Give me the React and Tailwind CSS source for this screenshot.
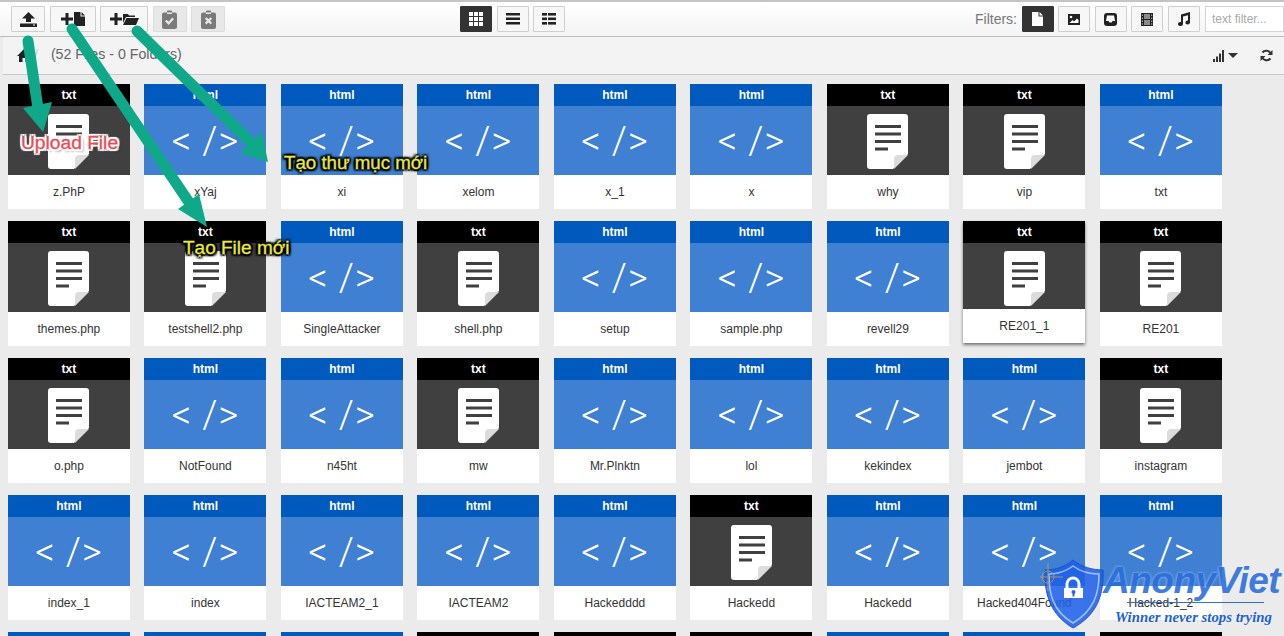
import React from "react";

const rows = [
  [["t","z.PhP"],["h","xYaj"],["h","xi"],["h","xelom"],["h","x_1"],["h","x"],["t","why"],["t","vip"],["h","txt"]],
  [["t","themes.php"],["t","testshell2.php"],["h","SingleAttacker"],["t","shell.php"],["h","setup"],["h","sample.php"],["h","revell29"],["t","RE201_1",true],["t","RE201"]],
  [["t","o.php"],["h","NotFound"],["h","n45ht"],["t","mw"],["h","Mr.Plnktn"],["h","lol"],["h","kekindex"],["h","jembot"],["t","instagram"]],
  [["h","index_1"],["h","index"],["h","IACTEAM2_1"],["h","IACTEAM2"],["h","Hackedddd"],["t","Hackedd"],["h","Hackedd"],["h","Hacked404Found"],["h","Hacked-1_2"]],
  [["h",""],["h",""],["h",""],["t",""],["t",""],["t",""],["h",""],["h",""],["t",""]],
];

function DocIcon() {
  return (
    <svg width="41" height="55" viewBox="0 0 41 55" className="block">
      <path d="M3 0h35a3 3 0 0 1 3 3v37L26 55H3a3 3 0 0 1-3-3V3a3 3 0 0 1 3-3z" fill="#fff" />
      <path d="M41 41 L27 55 L27 45 Q27 41 31 41 Z" fill="#dcdcdc" />
      <rect x="8" y="11" width="26" height="3" fill="#404040" />
      <rect x="8" y="18.5" width="26" height="3" fill="#404040" />
      <rect x="8" y="26" width="26" height="3" fill="#404040" />
      <rect x="8" y="33.5" width="13" height="3" fill="#404040" />
    </svg>
  );
}

function Card({ type, name, hover }) {
  const isTxt = type === "t";
  return (
    <div className={`w-[122px] flex flex-col ${hover ? "h-[122px] shadow-[0_2px_3px_rgba(0,0,0,0.5)]" : "h-[125px]"}`}>
      <div className={`h-[22px] flex items-center justify-center text-white text-[12px] font-bold ${isTxt ? "bg-black" : "bg-[#0059bd]"}`}>
        {isTxt ? "txt" : "html"}
      </div>
      <div className={`${hover ? "h-[66px]" : "h-[69px]"} overflow-hidden flex justify-center ${isTxt ? "bg-[#404040] pt-2" : "bg-[#4080d2] items-center"}`}>
        {isTxt ? <DocIcon /> : (
          <span className="text-white text-[38px] leading-none font-light whitespace-pre tracking-[1px] [font-family:Roboto,sans-serif]">{"< />"}</span>
        )}
      </div>
      <div className="flex-1 bg-white flex items-center justify-center text-[12px] text-[#333]">{name}</div>
    </div>
  );
}

const Btn = ({ w, active, disabled, children }) => (
  <div
    className={`h-[26px] ${w} flex items-center justify-center border rounded-[1px] ${
      active ? "bg-[#333] border-[#333]" : disabled ? "bg-[#e8e8e8] border-[#dcdcdc]" : "bg-[#f7f7f7] border-[#cfcfcf]"
    }`}
  >
    {children}
  </div>
);

const Upload = () => (
  <svg width="17" height="15" viewBox="0 0 17 15"><path d="M8.5 0 L15 6.5 H11 V10 H6 V6.5 H2 Z M0 11.5 H17 V15 H0 Z" fill="#222" /><rect x="13" y="12.5" width="2" height="1" fill="#fff"/></svg>
);
const Plus = () => (
  <svg width="12" height="12" viewBox="0 0 12 12"><path d="M4.5 0h3v4.5H12v3H7.5V12h-3V7.5H0v-3h4.5z" fill="#222" /></svg>
);
const FileI = ({ c = "#222" }) => (
  <svg width="11" height="14" viewBox="0 0 11 14"><path d="M0 0h6.5v4.5H11V14H0z M7.5 0 L11 3.5 H7.5z" fill={c} /></svg>
);
const Folder = () => (
  <svg width="16" height="12" viewBox="0 0 16 12"><path d="M0 1h5l1 1.5h6V4H3L0 10z M3.5 5H16l-3 7H0z" fill="#222" /></svg>
);
const Clip = ({ x }) => (
  <svg width="15" height="19" viewBox="0 0 15 19">
    <path d="M2 2.5h3V1.5a1 1 0 0 1 1-1h3a1 1 0 0 1 1 1v1h3a2 2 0 0 1 2 2V17a2 2 0 0 1-2 2H2a2 2 0 0 1-2-2V4.5a2 2 0 0 1 2-2z" fill="#7a7a7a" />
    <rect x="5" y="2.5" width="5" height="1.5" fill="#e8e8e8" />
    {x ? <path d="M4.7 8l5.6 5.6M10.3 8l-5.6 5.6" stroke="#e8e8e8" strokeWidth="2.2" /> : <path d="M3.8 10.5l2.8 2.8 4.6-5" stroke="#e8e8e8" strokeWidth="2.2" fill="none" />}
  </svg>
);
const Grid3 = ({ c }) => (
  <svg width="14" height="14" viewBox="0 0 14 14" fill={c}>
    {[0, 5, 10].flatMap((y) => [0, 5, 10].map((x) => <rect key={x + "-" + y} x={x} y={y} width="4" height="4" />))}
  </svg>
);
const ListI = () => (
  <svg width="14" height="12" viewBox="0 0 14 12" fill="#222"><rect width="14" height="2.5" /><rect y="4.5" width="14" height="2.5" /><rect y="9" width="14" height="2.5" /></svg>
);
const Table = () => (
  <svg width="14" height="12" viewBox="0 0 14 12" fill="#222">
    {[0, 4.5, 9].map((y) => <g key={y}><rect y={y} width="5" height="2.6" /><rect x="6" y={y} width="8" height="2.6" /></g>)}
  </svg>
);
const ImageI = () => (
  <svg width="12" height="11" viewBox="0 0 12 11"><path d="M0 0h12v11H0z" fill="#222" /><circle cx="3" cy="3" r="1.3" fill="#fff" /><path d="M1.5 9l3-3 1.5 1.5L9 4.5 10.5 6v3z" fill="#fff" /></svg>
);
const Inbox = () => (
  <svg width="13" height="13" viewBox="0 0 13 13"><path d="M3 0h7a3 3 0 0 1 3 3v7a3 3 0 0 1-3 3H3a3 3 0 0 1-3-3V3a3 3 0 0 1 3-3z" fill="#222" /><path d="M3 2.5h7L11 8H8.5L7.5 9.5h-2L4.5 8H2z" fill="#fff" /></svg>
);
const Film = () => (
  <svg width="12" height="13" viewBox="0 0 12 13">
    <path d="M0 0h12v13H0z" fill="#222" />
    <path d="M3 1h6v5H3zM3 7h6v5H3z" fill="#8a8a8a" />
    <path d="M.8 1.5h1.2v1.5H.8zM.8 4.5h1.2v1.5H.8zM.8 7.5h1.2v1.5H.8zM.8 10.2h1.2v1.5H.8zM10 1.5h1.2v1.5H10zM10 4.5h1.2v1.5H10zM10 7.5h1.2v1.5H10zM10 10.2h1.2v1.5H10z" fill="#999" />
  </svg>
);
const Music = () => (
  <svg width="13" height="14" viewBox="0 0 13 14"><path d="M4 2.5 L13 0 V10.5a2.3 2 0 1 1-2-2V3.2L6 4.6V12a2.5 2 0 1 1-2-2z" fill="#222" /></svg>
);

function Arrow({ tail, tip, a, b, w = 11 }) {
  const mx = (a[0] + b[0]) / 2, my = (a[1] + b[1]) / 2;
  return (
    <g>
      <line x1={tail[0]} y1={tail[1]} x2={mx} y2={my} stroke="#0fa98a" strokeWidth={w} strokeLinecap="round" />
      <polygon points={`${a} ${b} ${tip}`} fill="#0fa98a" />
    </g>
  );
}

export default function App() {
  return (
    <div className="relative w-[1284px] h-[636px] overflow-hidden bg-[#ebebeb] text-[#333] [font-family:'Liberation_Sans',Arial,sans-serif]">
      {/* toolbar */}
      <div className="h-[37px] flex items-center justify-between pl-[11px] pr-0 border-t-2 border-b border-t-[#c4c4c4] border-b-[#bdbdbd] bg-gradient-to-b from-white to-[#f4f4f4]">
        <div className="flex gap-[4.5px]">
          <Btn w="w-[34px]"><Upload /></Btn>
          <Btn w="w-[46px]"><div className="flex gap-[1px] items-center"><Plus /><FileI /></div></Btn>
          <Btn w="w-[48px]"><div className="flex gap-[1px] items-center"><Plus /><Folder /></div></Btn>
          <Btn w="w-[34px]" disabled><Clip /></Btn>
          <Btn w="w-[34px]" disabled><Clip x /></Btn>
        </div>
        <div className="flex gap-[4.5px] ml-[235px]">
          <Btn w="w-8" active><Grid3 c="#fff" /></Btn>
          <Btn w="w-8"><ListI /></Btn>
          <Btn w="w-8"><Table /></Btn>
        </div>
        <div className="flex items-center gap-[4.5px] ml-auto">
          <span className="text-[14px] text-[#777]">Filters:</span>
          <Btn w="w-8" active><FileI c="#fff" /></Btn>
          <Btn w="w-8"><ImageI /></Btn>
          <Btn w="w-8"><Inbox /></Btn>
          <Btn w="w-8"><Film /></Btn>
          <Btn w="w-8"><Music /></Btn>
          <div className="ml-[1px] w-[79px] h-[26px] border border-[#d4d4d4] bg-white flex items-center pl-[6px] text-[12px] text-[#aaa]">text filter...</div>
        </div>
      </div>
      {/* breadcrumb */}
      <div className="h-[38px] ml-[3px] flex items-center justify-between bg-[#f3f3f3] border-b border-[#c8c8c8] rounded-tl-[3px] pl-[14px] pr-[11px]">
        <div className="flex items-center">
          <svg width="14" height="13" viewBox="0 0 14 13"><path d="M7 0 L14 7 H12 V13 H8.5 V9 H5.5 V13 H2 V7 H0 Z" fill="#222" /></svg>
          <span className="text-[#ccc] text-[14px] ml-[3px]">/</span>
          <span className="text-[14.2px] text-[#666] ml-[13px] mt-[-1px]">(52 Files - 0 Folders)</span>
        </div>
        <div className="flex items-center">
          <svg width="12" height="12" viewBox="0 0 12 12" fill="#333"><rect y="9" width="2" height="3" /><rect x="3" y="6.5" width="2" height="5.5" /><rect x="6" y="3.5" width="2" height="8.5" /><rect x="9" y="0" width="2" height="12" /></svg>
          <span className="ml-[3px] w-0 h-0 border-x-[5px] border-x-transparent border-t-[5px] border-t-[#333]"></span>
          <svg width="13" height="13" viewBox="0 0 13 13" className="ml-[22px]" fill="none" stroke="#333" strokeWidth="2"><path d="M11 5A5 5 0 0 0 2.5 3.5M2 8a5 5 0 0 0 8.5 1.5" /><path d="M12.5 1v5h-5z M.5 12V7h5z" fill="#333" stroke="none" /></svg>
        </div>
      </div>
      {/* grid */}
      <div className="pt-[9px] pl-[7.9px] flex flex-col gap-3">
        {rows.map((row, i) => (
          <div key={i} className="grid grid-cols-[repeat(9,122px)] gap-x-[14.5px] h-[125px]">
            {row.map(([t, n, h], j) => <Card key={j} type={t} name={n} hover={h} />)}
          </div>
        ))}
      </div>

      {/* annotations */}
      <svg className="absolute left-0 top-0 pointer-events-none" width="1284" height="636">
        <Arrow tail={[28, 41]} tip={[43, 132]} a={[23, 108]} b={[52, 102]} />
        <Arrow tail={[72, 29]} tip={[207, 227]} a={[178, 209]} b={[199, 194]} />
        <Arrow tail={[137, 31]} tip={[268, 162]} a={[240, 153]} b={[262, 132]} />
      </svg>
      <div className="absolute left-[21px] top-[131px] text-[19.2px] leading-6 text-[#ef4a57] whitespace-nowrap [-webkit-text-stroke:0.3px_#ef4a57] [text-shadow:2px_0_0_#fff,-2px_0_0_#fff,0_2px_0_#fff,0_-2px_0_#fff,2px_2px_1px_#fff,-2px_-2px_1px_#fff,2px_-2px_1px_#fff,-2px_2px_1px_#fff,3px_3px_2px_rgba(0,0,0,0.3)]">Upload File</div>
      <div className="absolute left-[284px] top-[151px] text-[18.7px] leading-6 text-[#eaea3c] whitespace-nowrap [-webkit-text-stroke:0.3px_#eaea3c] [text-shadow:2px_0_1px_#000,-2px_0_1px_#000,0_2px_1px_#000,0_-2px_1px_#000,2px_2px_2px_#000,-2px_-2px_2px_#000,2px_-2px_2px_#000,-2px_2px_2px_#000]">Tạo thư mục mới</div>
      <div className="absolute left-[183px] top-[236px] text-[19px] leading-6 text-[#eaea3c] whitespace-nowrap [-webkit-text-stroke:0.3px_#eaea3c] [text-shadow:2px_0_1px_#000,-2px_0_1px_#000,0_2px_1px_#000,0_-2px_1px_#000,2px_2px_2px_#000,-2px_-2px_2px_#000,2px_-2px_2px_#000,-2px_2px_2px_#000]">Tạo File mới</div>

      {/* watermark */}
      <svg className="absolute left-[1040px] top-[555px] opacity-95" width="70" height="75" viewBox="0 0 70 75">
        <path d="M33 5 C41 12 53 15 63 15 C64 40 57 60 33 73 C11 60 4 40 5 15 C15 15 25 12 33 5z" fill="#1f5fe8" fillOpacity="0.92" stroke="#1a50c8" strokeWidth="1" />
        <path d="M33 11 C41 17 51 19 59 19 C59 40 53 56 33 68 C13 56 9 40 9 19 C17 19 25 17 33 11z" fill="none" stroke="#9cc0f8" strokeWidth="1.5" />
        <path d="M27 33 V29 a6 6 0 0 1 12 0 V33" fill="none" stroke="#fff" strokeWidth="3" />
        <rect x="24" y="33" width="19" height="10" fill="#fff" />
        <circle cx="33.5" cy="37" r="2" fill="#1f5fe8" />
        <rect x="32.5" y="38" width="2" height="3.5" fill="#1f5fe8" />
        <g stroke="#c9a25a" strokeWidth="1" fill="none" opacity="0.8">
          <circle cx="8" cy="22" r="6" />
          <path d="M-3 22H23M8 8V36" />
        </g>
      </svg>
      <div className="absolute left-[1103px] top-[561px] text-[37px] leading-10 font-bold italic text-[#2c6fdc] whitespace-nowrap [font-family:'Liberation_Sans',sans-serif] tracking-[-0.5px] [text-shadow:0_0_3px_rgba(255,255,255,0.6)] opacity-90">AnonyViet</div>
      <div className="absolute left-[1127px] top-[602px] w-[137px] h-px bg-[#2c6fdc]"></div>
      <div className="absolute left-[1115px] top-[608px] text-[14.8px] leading-[18px] font-bold italic text-[#2161cf] whitespace-nowrap [font-family:'Liberation_Serif',serif] [text-shadow:0_0_3px_rgba(255,255,255,0.8)]">Winner never stops trying</div>
    </div>
  );
}
